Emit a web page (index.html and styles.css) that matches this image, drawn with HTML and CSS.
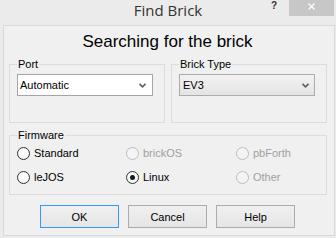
FILE: index.html
```html
<!DOCTYPE html>
<html>
<head>
<meta charset="utf-8">
<link rel="stylesheet" href="styles.css">
</head>
<body>
<div class="titlebar">
  <div class="tb-side"></div>
  <div class="tb-title">Find Brick</div>
  <div class="tb-side tb-controls">
    <span class="tb-help">?</span>
    <span class="tb-close"><svg width="7" height="7" viewBox="0 0 7 7"><path d="M0.5 0.5 L6.5 6.5 M6.5 0.5 L0.5 6.5" stroke="#fff" stroke-width="1.2" fill="none"/></svg></span>
  </div>
</div>
<div class="panel">
  <div class="heading">Searching for the brick</div>
  <div class="row">
    <fieldset class="group half">
      <legend>Port</legend>
      <div class="combo combo-edit">
        <span class="combo-text">Automatic</span>
        <svg class="chev" width="7" height="5" viewBox="0 0 7 5"><path d="M0.5 0.8 L3.5 3.8 L6.5 0.8" stroke="#5f5f5f" stroke-width="1.6" fill="none"/></svg>
      </div>
    </fieldset>
    <fieldset class="group half">
      <legend>Brick Type</legend>
      <div class="combo combo-list">
        <span class="combo-text">EV3</span>
        <svg class="chev" width="7" height="5" viewBox="0 0 7 5"><path d="M0.5 0.8 L3.5 3.8 L6.5 0.8" stroke="#5f5f5f" stroke-width="1.6" fill="none"/></svg>
      </div>
    </fieldset>
  </div>
  <fieldset class="group firmware">
    <legend>Firmware</legend>
    <div class="radios">
      <div class="radio"><span class="circle"></span>Standard</div>
      <div class="radio disabled"><span class="circle"></span>brickOS</div>
      <div class="radio disabled"><span class="circle"></span>pbForth</div>
      <div class="radio"><span class="circle"></span>leJOS</div>
      <div class="radio"><span class="circle checked"></span>Linux</div>
      <div class="radio disabled"><span class="circle"></span>Other</div>
    </div>
  </fieldset>
  <div class="buttons">
    <button class="btn default">OK</button>
    <button class="btn">Cancel</button>
    <button class="btn">Help</button>
  </div>
</div>
</body>
</html>
```
FILE: styles.css
```css
html, body {
  margin: 0;
  padding: 0;
}
body {
  width: 336px;
  height: 238px;
  overflow: hidden;
  background: #ebebeb;
  font-family: "Liberation Sans", Arial, sans-serif;
  font-size: 11px;
  color: #000;
}
.titlebar {
  display: grid;
  grid-template-columns: 1fr auto 1fr;
  height: 25px;
}
.tb-title {
  font-family: "Open Sans", "Noto Sans", sans-serif;
  font-size: 15px;
  line-height: 20px;
  color: #333;
}
.tb-controls {
  display: flex;
  justify-content: flex-end;
  align-items: flex-start;
}
.tb-help {
  font-weight: bold;
  font-size: 10px;
  line-height: 12px;
  color: #333;
  margin-right: 12px;
}
.tb-close {
  width: 45px;
  height: 16px;
  background: #c7c7c7;
  margin-right: 2px;
  display: flex;
  justify-content: center;
  align-items: flex-start;
  padding-top: 3px;
  box-sizing: border-box;
}
.tb-close svg {
  display: block;
}
.panel {
  margin: 0 1px 0 3px;
  height: 211px;
  box-sizing: border-box;
  border: 1px solid #d9d9d9;
  background: #f0f0f0;
  padding-top: 6px;
}
.heading {
  font-size: 17px;
  line-height: 20px;
  text-align: center;
  padding-right: 3px;
}
.row {
  display: flex;
  gap: 6px;
  margin: 6px 0 0 5px;
}
.group {
  margin: 0;
  border: 1px solid #dcdcdc;
  padding: 3px 6px 26px 7px;
  box-sizing: border-box;
  min-inline-size: 0;
}
.group legend {
  padding: 0 1px;
  font-size: 11px;
  line-height: 13px;
}
.half {
  width: 156px;
}
.combo {
  width: 136px;
  height: 22px;
  box-sizing: border-box;
  display: flex;
  align-items: center;
  justify-content: space-between;
}
.combo-edit {
  background: #fff;
  border: 1px solid #a5a5a5;
  padding: 0 6px 0 2px;
}
.combo-list {
  background: linear-gradient(#f2f2f2, #e4e4e4);
  border: 1px solid #acacac;
  padding: 0 5px 0 3px;
}
.chev {
  display: block;
}
.firmware {
  width: 318px;
  margin: 6px 0 0 5px;
  padding: 0 6px 6px 7px;
}
.radios {
  display: grid;
  grid-template-columns: 109px 110px 1fr;
  grid-auto-rows: 22px;
  row-gap: 2px;
}
.radio {
  display: flex;
  align-items: center;
  gap: 4px;
  line-height: 13px;
}
.circle {
  width: 13px;
  height: 13px;
  box-sizing: border-box;
  border: 1px solid #333;
  border-radius: 50%;
  background: radial-gradient(circle at 50% 40%, #fff, #f0f0f0);
  display: flex;
  align-items: center;
  justify-content: center;
}
.circle.checked::after {
  content: "";
  width: 5px;
  height: 5px;
  border-radius: 50%;
  background: #1a1a1a;
}
.disabled {
  color: #a0a0a0;
}
.disabled .circle {
  border-color: #bcbcbc;
  background: #f4f4f4;
}
.buttons {
  display: flex;
  gap: 9px;
  margin-top: 10px;
  padding-left: 36px;
}
.btn {
  width: 79px;
  height: 23px;
  box-sizing: border-box;
  border: 1px solid #acacac;
  background: linear-gradient(#f0f0f0, #e5e5e5);
  font-family: "Liberation Sans", Arial, sans-serif;
  font-size: 11px;
  color: #000;
  padding: 0;
  margin: 0;
}
.btn.default {
  border-color: #3399ff;
}
```
